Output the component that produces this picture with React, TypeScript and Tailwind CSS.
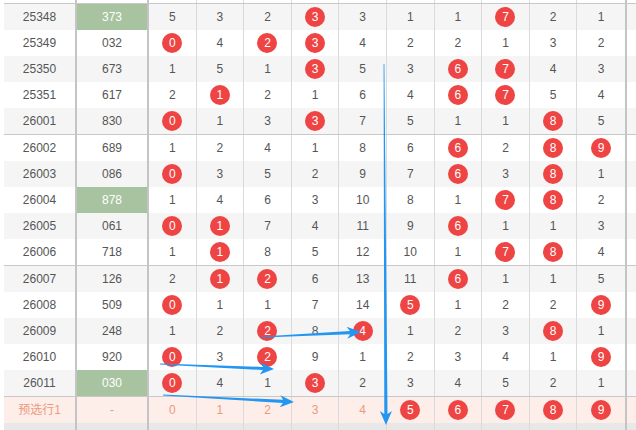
import React from "react";

type Row = { issue: string; num: string; green?: boolean; miss: number[] };

const rows: Row[] = [
  { issue: "25348", num: "373", green: true, miss: [5, 3, 2, 0, 3, 1, 1, 0, 2, 1] },
  { issue: "25349", num: "032", miss: [0, 4, 0, 0, 4, 2, 2, 1, 3, 2] },
  { issue: "25350", num: "673", miss: [1, 5, 1, 0, 5, 3, 0, 0, 4, 3] },
  { issue: "25351", num: "617", miss: [2, 0, 2, 1, 6, 4, 0, 0, 5, 4] },
  { issue: "26001", num: "830", miss: [0, 1, 3, 0, 7, 5, 1, 1, 0, 5] },
  { issue: "26002", num: "689", miss: [1, 2, 4, 1, 8, 6, 0, 2, 0, 0] },
  { issue: "26003", num: "086", miss: [0, 3, 5, 2, 9, 7, 0, 3, 0, 1] },
  { issue: "26004", num: "878", green: true, miss: [1, 4, 6, 3, 10, 8, 1, 0, 0, 2] },
  { issue: "26005", num: "061", miss: [0, 0, 7, 4, 11, 9, 0, 1, 1, 3] },
  { issue: "26006", num: "718", miss: [1, 0, 8, 5, 12, 10, 1, 0, 0, 4] },
  { issue: "26007", num: "126", miss: [2, 0, 0, 6, 13, 11, 0, 1, 1, 5] },
  { issue: "26008", num: "509", miss: [0, 1, 1, 7, 14, 0, 1, 2, 2, 0] },
  { issue: "26009", num: "248", miss: [1, 2, 0, 8, 0, 1, 2, 3, 0, 1] },
  { issue: "26010", num: "920", miss: [0, 3, 0, 9, 1, 2, 3, 4, 1, 0] },
  { issue: "26011", num: "030", green: true, miss: [0, 4, 1, 0, 2, 3, 4, 5, 2, 1] },
];

// tail -> tip, drawn as tapered annotation arrows
const arrows = [
  { x1: 384, y1: 64, x2: 386, y2: 425 },
  { x1: 262, y1: 337, x2: 361, y2: 332 },
  { x1: 160, y1: 364, x2: 274, y2: 369 },
  { x1: 163, y1: 395, x2: 294, y2: 402 },
];

function arrowPoints(a: { x1: number; y1: number; x2: number; y2: number }) {
  const dx = a.x2 - a.x1;
  const dy = a.y2 - a.y1;
  const len = Math.hypot(dx, dy);
  const ux = dx / len;
  const uy = dy / len;
  const nx = -uy;
  const ny = ux;
  const L = 13;
  const bx = a.x2 - ux * L;
  const by = a.y2 - uy * L;
  const w0 = 0.4;
  const w1 = 1.6;
  const h = 6;
  const pts = [
    [a.x1 + nx * w0, a.y1 + ny * w0],
    [bx + ux * 2 + nx * w1, by + uy * 2 + ny * w1],
    [bx - ux * 1 + nx * h, by - uy * 1 + ny * h],
    [a.x2, a.y2],
    [bx - ux * 1 - nx * h, by - uy * 1 - ny * h],
    [bx + ux * 2 - nx * w1, by + uy * 2 - ny * w1],
    [a.x1 - nx * w0, a.y1 - ny * w0],
  ];
  return pts.map((p) => `${p[0].toFixed(1)},${p[1].toFixed(1)}`).join(" ");
}

function Ball({ n }: { n: number }) {
  return (
    <span className="w-5 h-5 rounded-full bg-[#ee4444] text-white flex items-center justify-center text-[12px] leading-none">
      {n}
    </span>
  );
}

function Line({
  bg,
  h = "h-[26px]",
  first,
  second,
  cells,
}: {
  bg: string;
  h?: string;
  first?: React.ReactNode;
  second?: React.ReactNode;
  cells?: React.ReactNode[];
}) {
  return (
    <div className={`flex ${h} ${bg}`}>
      <div className="w-[73px] shrink-0 border-r-2 border-[#c4c4c4] flex items-center justify-center">{first}</div>
      <div className="w-[72px] shrink-0 border-r-2 border-[#c4c4c4] flex items-center justify-center">{second}</div>
      <div className="w-[476px] shrink-0 grid grid-cols-10">
        {Array.from({ length: 10 }).map((_, i) => (
          <div
            key={i}
            className={`flex items-center justify-center ${i < 9 ? "border-r border-[#dadada]" : ""}`}
          >
            {cells ? cells[i] : null}
          </div>
        ))}
      </div>
      <div className="w-[11px] shrink-0 border-l-2 border-[#c4c4c4]" />
    </div>
  );
}

export default function App() {
  const groups = [rows.slice(0, 5), rows.slice(5, 10), rows.slice(10, 15)];
  return (
    <div
      className="relative w-[636px] h-[430px] overflow-hidden bg-white pl-1 text-[12px] text-[#555]"
      style={{ fontFamily: '"Liberation Sans", Arial, "Noto Sans CJK SC", sans-serif' }}
    >
      <Line bg="bg-white" h="h-[3px]" />
      {groups.map((g, gi) => (
        <div key={gi} className="border-t border-[#c8c8c8]">
          {g.map((r, ri) => {
            const idx = gi * 5 + ri;
            return (
              <Line
                key={r.issue}
                bg={idx % 2 === 0 ? "bg-[#f5f5f5]" : "bg-white"}
                first={r.issue}
                second={
                  r.green ? (
                    <div className="w-full h-full bg-[#a7c3a0] text-white flex items-center justify-center">{r.num}</div>
                  ) : (
                    r.num
                  )
                }
                cells={r.miss.map((m, d) => (r.num.includes(String(d)) ? <Ball n={d} /> : <span>{m}</span>))}
              />
            );
          })}
        </div>
      ))}
      <div className="border-t border-[#c8c8c8] text-[#ec9a7e]">
        <Line
          bg="bg-[#fdeee9]"
          first="预选行1"
          second="-"
          cells={[0, 1, 2, 3, 4, 5, 6, 7, 8, 9].map((d) => (d >= 5 ? <Ball n={d} /> : <span>{d}</span>))}
        />
      </div>
      <Line bg="bg-[#e8e8e8]" h="h-[10px]" />

      <svg className="absolute inset-0 pointer-events-none" width="636" height="430">
        {arrows.map((a, i) => (
          <polygon key={i} points={arrowPoints(a)} fill="#2196f3" />
        ))}
      </svg>
    </div>
  );
}
